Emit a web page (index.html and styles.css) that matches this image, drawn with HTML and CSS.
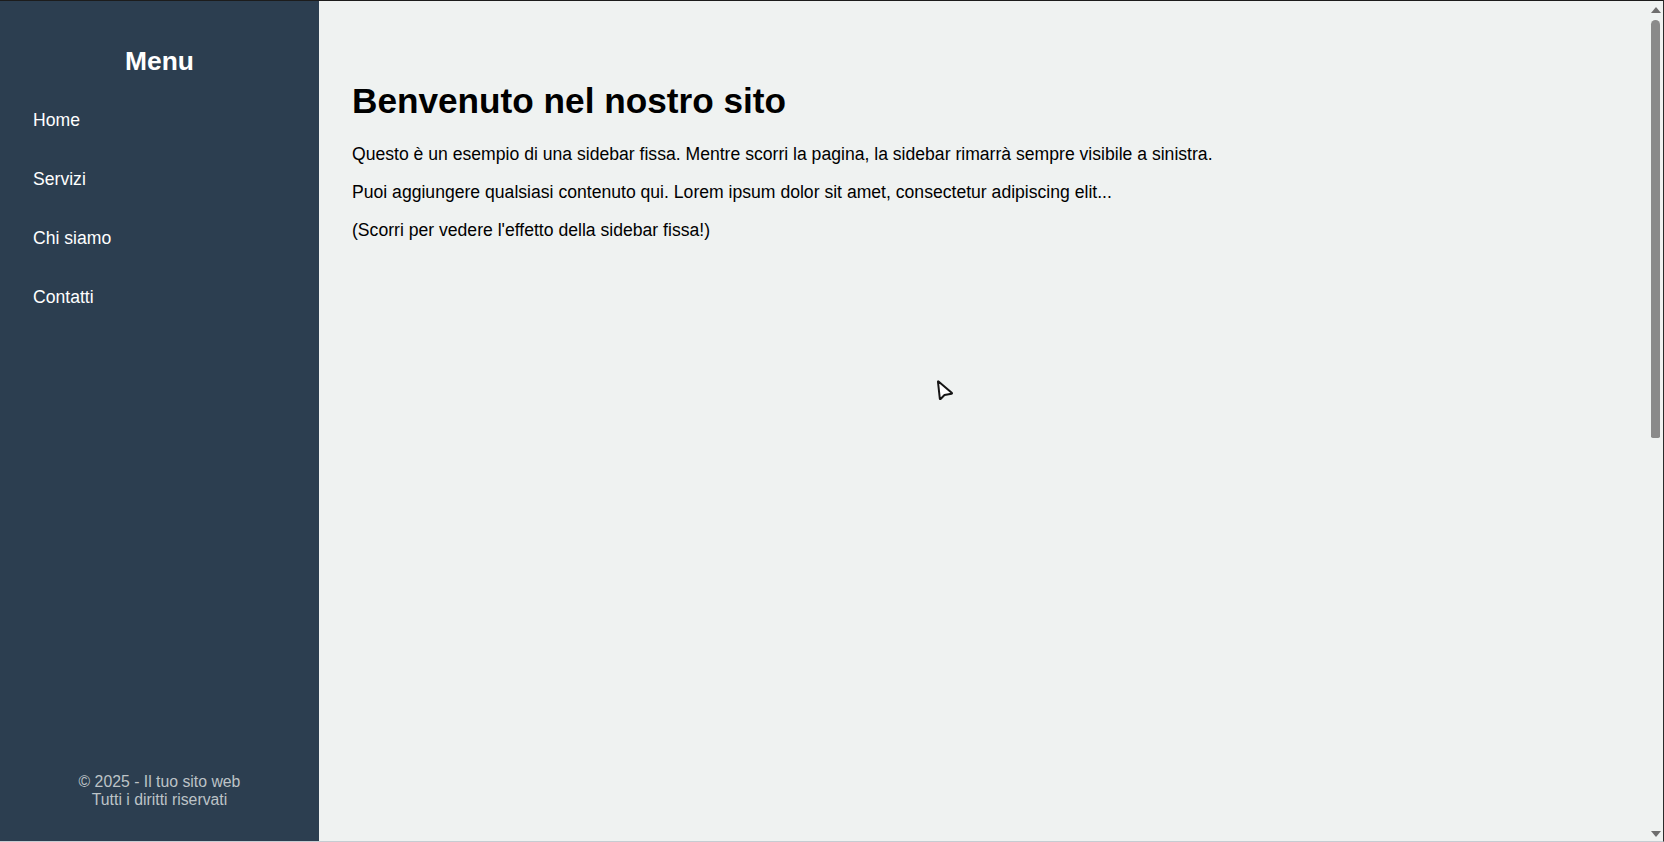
FILE: index.html
```html
<!DOCTYPE html>
<html lang="it">
<head>
  <meta charset="UTF-8" />
  <meta name="viewport" content="width=device-width, initial-scale=1.0"/>
  <title>Sidebar fissa</title>
  <link rel="stylesheet" href="styles.css">
</head>
<body>
  <div class="page">
    <aside class="sidebar">
      <h2>Menu</h2>
      <ul class="nav">
        <li><a href="#">Home</a></li>
        <li><a href="#">Servizi</a></li>
        <li><a href="#">Chi siamo</a></li>
        <li><a href="#">Contatti</a></li>
      </ul>
      <div class="sidebar-footer">
        <p>&copy; 2025 - Il tuo sito web<br>Tutti i diritti riservati</p>
      </div>
    </aside>

    <main class="content">
      <h1>Benvenuto nel nostro sito</h1>
      <p>Questo è un esempio di una sidebar fissa. Mentre scorri la pagina, la sidebar rimarrà sempre visibile a sinistra.</p>
      <p>Puoi aggiungere qualsiasi contenuto qui. Lorem ipsum dolor sit amet, consectetur adipiscing elit...</p>
      <p>(Scorri per vedere l'effetto della sidebar fissa!)</p>
    </main>
  </div>

  <div class="scrollbar">
    <span class="arrow up"></span>
    <span class="thumb"></span>
    <span class="arrow down"></span>
  </div>

  <svg class="cursor" width="22" height="24" viewBox="0 0 22 24">
    <path d="M3.5 2.5 Q2.8 2 3 3 L4.8 19.5 Q5 20.5 5.8 19.8 L9.5 16 L16.5 14.8 Q17.5 14.5 16.7 13.8 Z" fill="#fff" stroke="#151515" stroke-width="2" stroke-linejoin="round"/>
  </svg>
</body>
</html>
```

FILE: styles.css
```css
html, body {
  height: 100%;
}

body {
  margin: 0;
  overflow: hidden;
  font-family: "Liberation Sans", Arial, sans-serif;
  background-color: #eff2f1;
  color: #000;
}

.page {
  display: flex;
  height: 100vh;
  box-sizing: border-box;
  border-top: 1px solid #1c1c1c;
  border-right: 1px solid #2b2b2b;
  border-bottom: 1px solid #c6ccd2;
}

.sidebar {
  width: 319px;
  flex-shrink: 0;
  box-sizing: border-box;
  padding: 22px 22px 33px;
  background-color: #2c3e50;
  color: #fff;
  display: flex;
  flex-direction: column;
}

.sidebar h2 {
  margin: 23px 0 21px;
  font-size: 26.4px;
  line-height: 30px;
  text-align: center;
}

.nav {
  list-style: none;
  margin: 0;
  padding: 0;
}

.nav li {
  margin-bottom: 13px;
}

.nav a {
  display: block;
  padding: 13px 11px;
  font-size: 17.6px;
  line-height: 20px;
  color: #fff;
  text-decoration: none;
}

.sidebar-footer {
  margin-top: auto;
  text-align: center;
  color: #bdc3c7;
  font-size: 15.8px;
  line-height: 17.3px;
}

.sidebar-footer p {
  margin: 0;
}

.content {
  flex: 1;
  padding: 56px 33px;
}

.content h1 {
  margin: 24px 0 23px;
  font-size: 35.2px;
  line-height: 40px;
}

.content p {
  margin: 0 0 17.6px;
  font-size: 17.6px;
  line-height: 20.6px;
}

.scrollbar {
  position: fixed;
  top: 1px;
  right: 1px;
  bottom: 1px;
  width: 14px;
}

.thumb {
  position: absolute;
  top: 19px;
  left: 2px;
  width: 9px;
  height: 418px;
  border-radius: 5px 5px 2px 2px;
  background-color: #8a8a8a;
}

.arrow {
  position: absolute;
  left: 2px;
  width: 0;
  height: 0;
  border-left: 5px solid transparent;
  border-right: 5px solid transparent;
}

.arrow.up {
  top: 6px;
  border-bottom: 6px solid #6e6e6e;
}

.arrow.down {
  bottom: 4px;
  border-top: 6px solid #6e6e6e;
}

.cursor {
  position: absolute;
  left: 935px;
  top: 379px;
}
```
